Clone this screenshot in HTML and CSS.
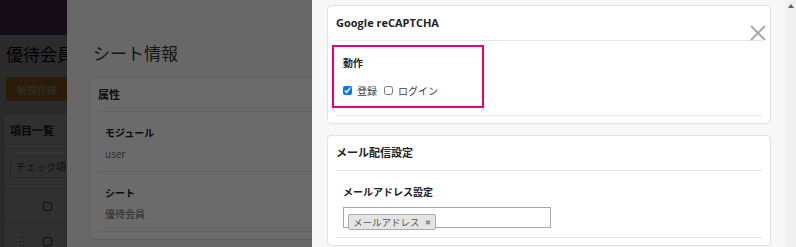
FILE: index.html
```html
<!DOCTYPE html>
<html lang="ja">
<head>
  <meta charset="UTF-8">
  <meta name="viewport" content="width=device-width, initial-scale=1.0">
  <title>シート情報</title>

  <link rel="stylesheet" href="styles.css">

</head>
<body>

  <!-- base page -->
  <div class="page">
    <div class="topbar"></div>
    <div class="pagemain">
      <h1 class="pagetitle">優待会員</h1>
      <button class="newbutton">新規作成</button>
      <div class="listcard">
        <div class="listhead">項目一覧</div>
        <div class="listtools"><div class="selectbox">チェック項目</div></div>
        <div class="listrow"><span class="handle"></span><span class="box"></span></div>
        <div class="listrow">
          <span class="handle">
            <svg width="5" height="9" viewBox="0 0 5 9"><g fill="#666"><rect x="0" y="0" width="1" height="1"/><rect x="3" y="0" width="1" height="1"/><rect x="0" y="4" width="1" height="1"/><rect x="3" y="4" width="1" height="1"/><rect x="0" y="8" width="1" height="1"/><rect x="3" y="8" width="1" height="1"/></g></svg>
          </span>
          <span class="box"></span>
        </div>
      </div>
    </div>
  </div>

  <div class="shade"></div>

  <!-- sheet drawer -->
  <div class="sheetdrawer">
    <h2 class="drawertitle">シート情報</h2>
    <div class="card">
      <div class="cardhead">属性</div>
      <div class="cardbody">
        <div class="group">
          <div class="label">モジュール</div>
          <div class="value">user</div>
        </div>
        <div class="group">
          <div class="label">シート</div>
          <div class="value">優待会員</div>
        </div>
      </div>
    </div>
  </div>

  <div class="shade shadetwo"></div>

  <!-- settings drawer -->
  <div class="settingdrawer">
    <div class="settingscroll">
      <div class="card">
        <div class="cardhead">Google reCAPTCHA</div>
        <div class="cardbody">
          <div class="group tightgroup">
            <div class="highlight">
              <div class="label">動作</div>
              <div class="checks">
                <label class="check"><input type="checkbox" checked>登録</label>
                <label class="check"><input type="checkbox">ログイン</label>
              </div>
            </div>
          </div>
        </div>
      </div>

      <div class="card">
        <div class="cardhead">メール配信設定</div>
        <div class="cardbody">
          <div class="group">
            <div class="label">メールアドレス設定</div>
            <div class="taginput"><span class="tag">メールアドレス<span class="tagx">✖</span></span></div>
          </div>
        </div>
      </div>
    </div>
    <div class="scrollbar"><span class="arrowup"></span></div>

    <button class="closebutton">
      <svg width="18" height="16" viewBox="0 0 18 16"><path d="M2 1 L16 15 M16 1 L2 15" stroke="#a9a9a9" stroke-width="2" fill="none"/></svg>
    </button>
  </div>

</body>
</html>
```

FILE: styles.css
```css
body{
 margin: 0;
 width: 796px;
 height: 247px;
 overflow: hidden;
 position: relative;
 font-family: "Open Sans", "Noto Sans CJK JP", sans-serif;
 color: #333;
}

/* base page */
.page {
 height: 247px;
 overflow: hidden;
 background-color: #e2e2e2;
}
.topbar {
 height: 35px;
 background-color: #70467f;
}
.pagemain {
 padding: 8px 0 0 6px;
}
.pagetitle {
 margin: 0;
 font-size: 17px;
 line-height: 24px;
 font-weight: normal;
 white-space: nowrap;
 color: #111;
}
.newbutton {
 display: block;
 margin-top: 10px;
 width: 80px;
 height: 24px;
 border: none;
 border-radius: 3px;
 padding: 0 0 0 11px;
 text-align: left;
 background-color: #e4983a;
 color: #fff;
 font-family: inherit;
 font-size: 10px;
}
.listcard {
 margin: 12px 0 0 -3px;
 width: 200px;
 background-color: #fff;
 border: 1px solid #cfcfcf;
 border-radius: 4px;
}
.listhead {
 height: 34px;
 line-height: 34px;
 padding: 0 6px;
 font-size: 11px;
 font-weight: bold;
 border-bottom: 1px solid #ddd;
}
.listtools {
 padding: 7px 6px 10px;
 border-bottom: 1px solid #ddd;
}
.selectbox {
 width: 120px;
 height: 22px;
 box-sizing: border-box;
 border: 1px solid #ccc;
 border-radius: 4px;
 padding-left: 5px;
 line-height: 20px;
 font-size: 10px;
 color: #555;
}
.listrow {
 height: 34px;
 display: flex;
 align-items: center;
 border-bottom: 1px solid #ddd;
}
.handle {
 width: 6px;
 height: 9px;
 margin-left: 16px;
 display: flex;
}
.box {
 width: 9px;
 height: 9px;
 box-sizing: border-box;
 margin-left: 17px;
 border: 1px solid #555;
 border-radius: 2px;
}

/* overlays */
.shade {
 position: absolute;
 top: 0;
 left: 0;
 right: 0;
 bottom: 0;
 background-color: rgba(0, 0, 0, 0.55);
}
.shadetwo {
 background-color: rgba(0, 0, 0, 0.58);
}

/* cards shared */
.card {
 background-color: #fff;
 border: 1px solid #e1e1e1;
 border-radius: 4px;
 padding: 0 8px;
}
.cardhead {
 height: 34px;
 line-height: 34px;
 font-size: 11px;
 font-weight: bold;
 color: #222;
 border-bottom: 1px solid #e6e6e6;
}
.cardbody {
 padding-bottom: 7px;
}
.group {
 padding: 13px 7px 9px;
 border-bottom: 1px solid #e6e6e6;
}
.label {
 font-size: 10px;
 line-height: 16px;
 font-weight: bold;
 color: #222;
}
.value {
 margin-top: 5px;
 font-size: 10px;
 line-height: 16px;
 color: #666;
}

/* sheet drawer */
.sheetdrawer {
 position: absolute;
 top: 0;
 left: 67px;
 right: 0;
 bottom: 0;
 overflow: hidden;
 padding-left: 22px;
 background-color: #f7f7f7;
}
.drawertitle {
 margin: 0;
 padding: 43px 0 0 4px;
 font-size: 17px;
 line-height: 22px;
 font-weight: normal;
 margin-bottom: 12px;
}
.sheetdrawer .cardhead {
 height: 33px;
 line-height: 33px;
}

/* settings drawer */
.settingdrawer {
 position: absolute;
 top: 0;
 left: 312px;
 right: 0;
 bottom: 0;
 overflow: hidden;
 display: flex;
 background-color: #f7f7f7;
}
.settingscroll {
 flex: 1;
 padding: 5px 14px 0 15px;
}
.settingscroll .card {
 margin-bottom: 11px;
}
.tightgroup {
 padding: 4px 0 7px;
}
.highlight {
 width: 152px;
 height: 63px;
 box-sizing: border-box;
 margin-left: -4px;
 border: 2px solid #e4007f;
 padding: 8px 0 0 9px;
}
.checks {
 margin-top: 11px;
 display: flex;
 align-items: center;
 height: 16px;
}
.check {
 display: flex;
 align-items: center;
 font-size: 10px;
 color: #444;
 margin-right: 7px;
}
.check input {
 width: 9px;
 height: 9px;
 margin: 0 5px 0 0;
}
.taginput {
 margin-top: 7px;
 width: 208px;
 height: 21px;
 box-sizing: border-box;
 border: 1px solid #aaa;
 padding: 1px 4px;
 background-color: #fff;
}
.tag {
 display: inline-flex;
 align-items: center;
 height: 16px;
 box-sizing: border-box;
 padding: 0 4px;
 border: 1px solid #aaa;
 border-radius: 2px;
 background-color: #e4e4e4;
 font-size: 9.5px;
 color: #555;
}
.tagx {
 margin-left: 5px;
 font-size: 7px;
 color: #888;
}
.scrollbar {
 width: 11px;
 flex: none;
 background-color: #f0f0f0;
 display: flex;
 justify-content: center;
 padding-top: 4px;
 box-sizing: border-box;
}
.arrowup {
 width: 0;
 height: 0;
 border-left: 3px solid transparent;
 border-right: 3px solid transparent;
 border-bottom: 4px solid #606060;
}
.closebutton {
 position: absolute;
 left: 437px;
 top: 25px;
 padding: 0;
 border: none;
 background: none;
 display: flex;
}
```
